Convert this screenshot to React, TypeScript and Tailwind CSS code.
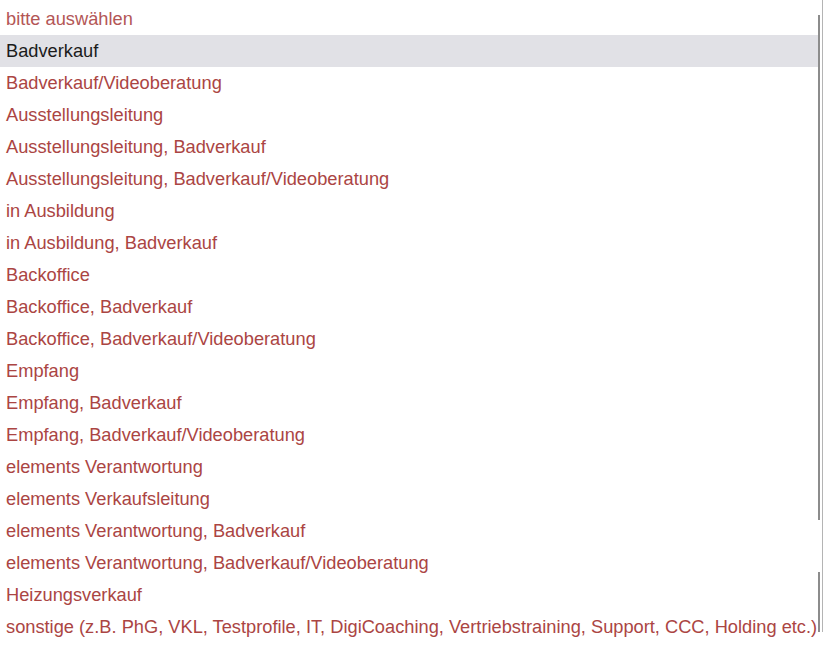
const options = [
  "bitte auswählen",
  "Badverkauf",
  "Badverkauf/Videoberatung",
  "Ausstellungsleitung",
  "Ausstellungsleitung, Badverkauf",
  "Ausstellungsleitung, Badverkauf/Videoberatung",
  "in Ausbildung",
  "in Ausbildung, Badverkauf",
  "Backoffice",
  "Backoffice, Badverkauf",
  "Backoffice, Badverkauf/Videoberatung",
  "Empfang",
  "Empfang, Badverkauf",
  "Empfang, Badverkauf/Videoberatung",
  "elements Verantwortung",
  "elements Verkaufsleitung",
  "elements Verantwortung, Badverkauf",
  "elements Verantwortung, Badverkauf/Videoberatung",
  "Heizungsverkauf",
  "sonstige (z.B. PhG, VKL, Testprofile, IT, DigiCoaching, Vertriebstraining, Support, CCC, Holding etc.)",
];

function rowClass(i: number) {
  if (i === 1) {
    return "flex h-8 items-center whitespace-nowrap bg-[#e1e1e6] px-[6px] text-[#1b1b1b]";
  }
  if (i === 0) {
    return "flex h-8 items-center whitespace-nowrap px-[6px] text-[#b35656]";
  }
  return "flex h-8 items-center whitespace-nowrap px-[6px] text-[#ab4543]";
}

export default function App() {
  return (
    <div className="flex h-[647px] w-[824px] bg-white font-['Liberation_Sans',Arial,sans-serif] text-[18.25px]">
      <ul className="w-[818px] pt-[3px]">
        {options.map((label, i) => (
          <li key={label} className={rowClass(i)}>
            {label}
          </li>
        ))}
      </ul>
      <div className="flex w-[2px] flex-col">
        <div className="h-[15px]" />
        <div className="h-[505px] bg-[#8c8c8c]" />
        <div className="h-[52px]" />
        <div className="h-[60px] bg-[#8c8c8c]" />
      </div>
      <div className="w-[2px]" />
      <div className="h-[632px] w-[1px] bg-[#b4b4b4]" />
    </div>
  );
}
